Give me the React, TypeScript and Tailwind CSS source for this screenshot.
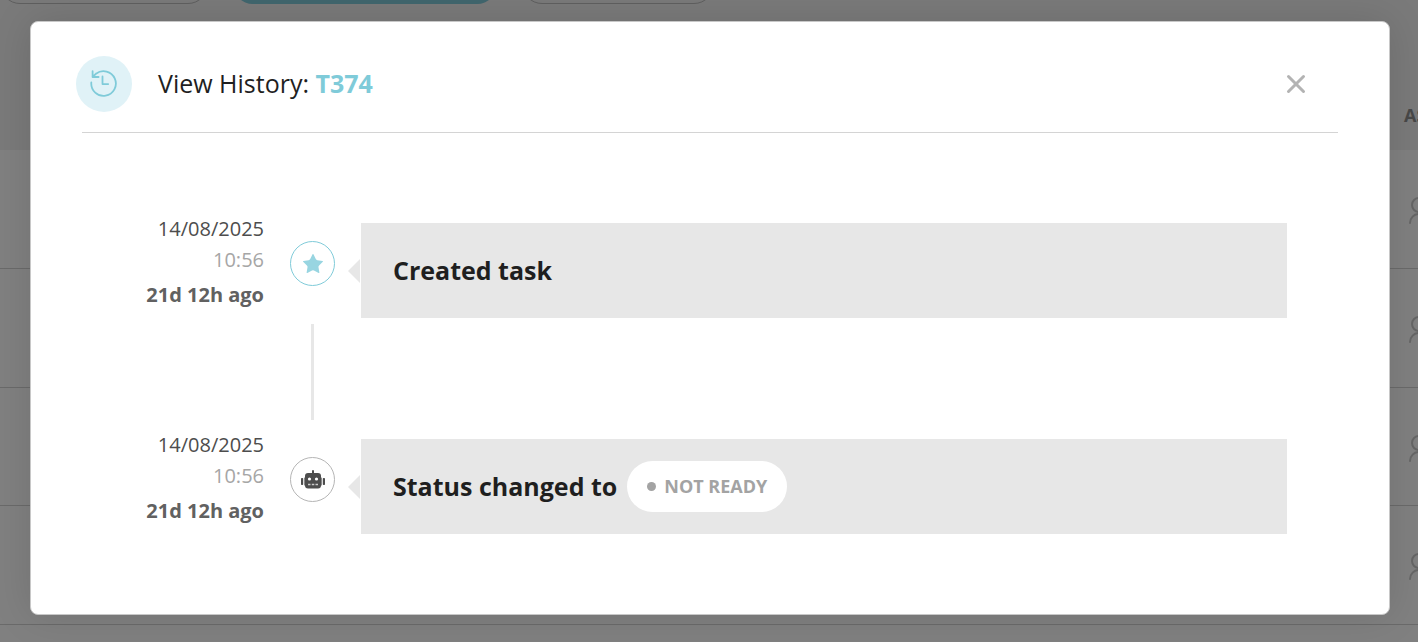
import React from "react";
import { Star, X } from "lucide-react";

const cells = ["h-[119px]", "h-[119px]", "h-[118px]", "h-[119px]"];

function HistoryIcon() {
  return (
    <svg viewBox="0 0 28 28" className="size-7" fill="none" stroke="#7fcbd9" strokeWidth="1.8" strokeLinecap="round" strokeLinejoin="round" aria-hidden="true">
      <path d="M1.300 12.500A12.300 12.300 0 1 0 6 3.800M2.600 1.200v5.800h6M2.600 7 5.800 3.800M12.500 6.500v7.600h5.700" />
    </svg>
  );
}

function RobotIcon() {
  return (
    <svg viewBox="0 0 24 20" className="h-5 w-6" fill="#4d4d4d" aria-hidden="true">
      <rect x="11" y="0" width="2" height="5" rx="1" />
      <rect x="0" y="8" width="2.200" height="7" rx="0.700" />
      <rect x="21.800" y="8" width="2.200" height="7" rx="0.700" />
      <rect x="3" y="7.500" width="18" height="8" rx="0.500" fill="#8a8a8a" />
      <rect x="4" y="3" width="16" height="15.500" rx="3" />
      <circle cx="8.500" cy="9" r="1.600" fill="#fff" />
      <circle cx="15.500" cy="9" r="1.600" fill="#fff" />
      <path d="M7 14.500h2.500M10.800 14.500h2.500M14.500 14.500h2.500" stroke="#ccc" strokeWidth="1.300" />
    </svg>
  );
}

function Backdrop() {
  return (
    <div aria-hidden="true" className="absolute inset-0 overflow-hidden bg-[#7a7a7a]">
      <div className="flex h-[150px] flex-col justify-between">
        <div className="flex h-1 items-end gap-[25px]">
          <span className="h-10 w-[208px] shrink-0 rounded-full border border-[#5f5f5f]" />
          <span className="h-10 w-[264px] shrink-0 rounded-full bg-[#41666e]" />
          <span className="h-10 w-[192px] shrink-0 rounded-full border border-[#5f5f5f]" />
        </div>
        <div className="flex h-[72px] justify-end overflow-hidden">
          <span className="w-[14px] pt-6 text-[18px] font-bold text-[#484848]">ASSIGNEE</span>
        </div>
      </div>
      {cells.map((height, i) => (
        <div key={i} className={`flex items-center justify-end overflow-hidden border-b border-[#6a6a6a] bg-[#808080] ${height}`}>
          <div className="w-[10px] pt-1">
            <svg viewBox="0 0 28 28" className="size-7" fill="none" stroke="#666" strokeWidth="2" strokeLinecap="round">
              <circle cx="11" cy="8" r="7" />
              <path d="M2 26c0-5 4-9 9-9s9 4 9 9" />
            </svg>
          </div>
        </div>
      ))}
      <div className="h-[119px] bg-[#808080]" />
    </div>
  );
}

function Entry({ icon, accent, children }: { icon: React.ReactNode; accent?: boolean; children: React.ReactNode }) {
  return (
    <li className="flex h-[95px]">
      <div className="w-[183px] shrink-0 text-right text-[20px]">
        <p className="-mt-2 leading-7 text-[#4d4d4d]">14/08/2025</p>
        <p className="mt-[3px] leading-7 text-[#a6a6a6]">10:56</p>
        <p className="mt-[7px] leading-7 font-bold text-[#616161]">21d 12h ago</p>
      </div>
      <span className={`mt-[18px] ml-[26px] flex size-[45px] shrink-0 items-center justify-center rounded-full border bg-white ${accent ? "border-[#7fcbd9]" : "border-[#b5b5b5]"}`}>
        {icon}
      </span>
      <svg viewBox="0 0 12 24" className="mt-9 ml-[13px] h-6 w-3 shrink-0" fill="#e7e7e7" aria-hidden="true">
        <path d="M12 0v24L0 12z" />
      </svg>
      <div className="ml-px flex min-w-0 grow items-center gap-2.5 bg-[#e7e7e7] pl-8 text-[25px] font-bold text-[#1f1f1f]">{children}</div>
    </li>
  );
}

export default function App() {
  return (
    <div className="relative min-h-screen font-['Open_Sans','Noto_Sans',sans-serif]">
      <Backdrop />
      <div className="relative pt-[21px] pr-7 pb-[27px] pl-[30px]">
        <section role="dialog" aria-modal="true" aria-labelledby="history-title" className="rounded-lg border border-[#c8c8c8] bg-white px-[45px] pt-[34px] pb-20 shadow-[0_0_40px_rgba(0,0,0,0.12)]">
          <header className="flex h-14 items-center">
            <span className="flex size-14 items-center justify-center rounded-full bg-[#e0f2f7]">
              <HistoryIcon />
            </span>
            <h1 id="history-title" className="ml-[26px] text-[25px] text-[#1f1f1f]">
              View History: <strong className="font-bold text-[#7fcbd9]">T374</strong>
            </h1>
            <button type="button" aria-label="Close" className="mr-8 ml-auto flex size-8 items-center justify-center text-[#b3b3b3]">
              <X size={30} strokeWidth={2.4} />
            </button>
          </header>
          <hr className="mx-[6px] mt-5 border-[#d4d4d4]" />
          <ol className="mt-[90px] mr-[57px] ml-[5px]">
            <Entry accent icon={<Star size={24} fill="#98d5e1" stroke="none" />}>Created task</Entry>
            <li aria-hidden="true" className="mt-[6px] mb-[19px] ml-[230px] h-24 w-[3px] bg-[#e7e7e7]" />
            <Entry icon={<RobotIcon />}>
              Status changed to
              <span className="flex h-[51px] items-center gap-2 rounded-full bg-white px-5 text-[18px] font-bold text-[#a3a3a3]">
                <span className="size-[9px] rounded-full bg-[#a3a3a3]" />
                NOT READY
              </span>
            </Entry>
          </ol>
        </section>
      </div>
    </div>
  );
}
